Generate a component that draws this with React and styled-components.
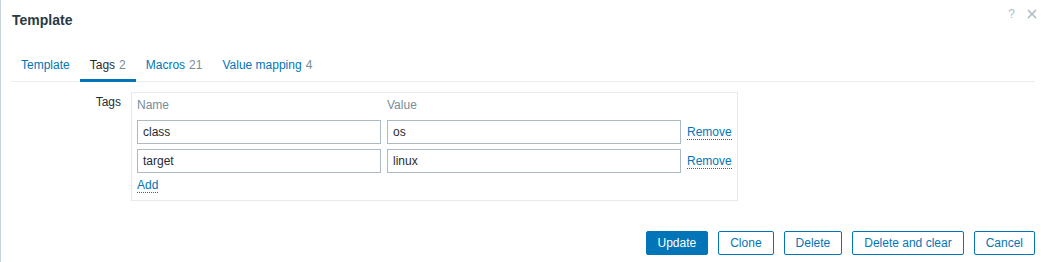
import React from "react";
import styled, { createGlobalStyle } from "styled-components";

const Global = createGlobalStyle`
  html, body { margin: 0; padding: 0; background: #fff; }
  body { font-family: "Liberation Sans", Arial, sans-serif; font-size: 12px; color: #1f2c33; }
  * { box-sizing: border-box; }
`;

const Dialog = styled.div`
  width: 1041px;
  height: 262px;
  border-left: 1px solid #c9d4da;
  background: #fff;
  display: flex;
  flex-direction: column;
`;

const Header = styled.div`
  display: flex;
  align-items: flex-start;
  justify-content: space-between;
  padding: 12px 4px 0 11px;
  height: 51px;
`;

const Title = styled.h4`
  margin: 0;
  font-size: 14px;
  line-height: 16px;
  font-weight: bold;
  color: #2b3a42;
`;

const HeaderIcons = styled.div`
  display: flex;
  align-items: center;
  gap: 12px;
  margin-top: -5px;
`;

const HelpMark = styled.span`
  color: #acbbc2;
  font-size: 12px;
  line-height: 14px;
`;

const Body = styled.div`
  padding: 0 6px 0 10px;
`;

const TabList = styled.div`
  display: flex;
  border-bottom: 1px solid #ebeef0;
  height: 31px;
`;

const Tab = styled.div`
  padding: 7px 10px 7px;
  line-height: 14px;
  height: 31px;
  color: ${(p) => (p.$active ? "#1f2c33" : "#0275b8")};
  border-bottom: 3px solid ${(p) => (p.$active ? "#0275b8" : "transparent")};
  white-space: nowrap;
`;

const Count = styled.span`
  color: #768d99;
  margin-left: 4px;
`;

const FormGrid = styled.div`
  display: grid;
  grid-template-columns: 110px auto;
  column-gap: 10px;
  margin-top: 10px;
  justify-content: start;
`;

const Label = styled.div`
  text-align: right;
  padding-top: 3px;
  line-height: 14px;
  color: #1f2c33;
`;

const TableBox = styled.div`
  border: 1px solid #e6eaec;
  padding: 5px;
  display: grid;
  grid-template-columns: 244px 294px auto;
  column-gap: 6px;
  row-gap: 5px;
  align-items: center;
`;

const Th = styled.div`
  color: #768d99;
  line-height: 14px;
  height: 17px;
  align-self: start;
`;

const Input = styled.input`
  height: 24px;
  width: 100%;
  border: 1px solid #acbbc2;
  padding: 0 5px;
  font-family: "Liberation Sans", Arial, sans-serif;
  font-size: 12px;
  color: #1f2c33;
  background: #fff;
  outline: none;
`;

const LinkAction = styled.span`
  color: #0275b8;
  border-bottom: 1px dotted #0275b8;
  line-height: 14px;
  justify-self: start;
  cursor: pointer;
`;

const AddCell = styled.div`
  grid-column: 1 / -1;
  height: 17px;
  line-height: 14px;
`;

const Footer = styled.div`
  display: flex;
  justify-content: flex-end;
  gap: 10px;
  padding: 30px 6px 0 10px;
`;

const Button = styled.button`
  height: 24px;
  padding: 0 11px;
  border: 1px solid #0275b8;
  border-radius: 2px;
  font-family: "Liberation Sans", Arial, sans-serif;
  font-size: 12px;
  line-height: 22px;
  color: ${(p) => (p.$primary ? "#fff" : "#0275b8")};
  background: ${(p) => (p.$primary ? "#0275b8" : "#fff")};
  cursor: pointer;
`;

const CloseIcon = () => (
  <svg width="10" height="10" viewBox="0 0 10 10">
    <path d="M1 1L9 9M9 1L1 9" stroke="#acbbc2" strokeWidth="1.6" />
  </svg>
);

const tags = [
  { name: "class", value: "os" },
  { name: "target", value: "linux" },
];

export default function App() {
  return (
    <>
      <Global />
      <Dialog>
        <Header>
          <Title>Template</Title>
          <HeaderIcons>
            <HelpMark>?</HelpMark>
            <CloseIcon />
          </HeaderIcons>
        </Header>
        <Body>
          <TabList>
            <Tab>Template</Tab>
            <Tab $active>
              Tags<Count>2</Count>
            </Tab>
            <Tab>
              Macros<Count>21</Count>
            </Tab>
            <Tab>
              Value mapping<Count>4</Count>
            </Tab>
          </TabList>
          <FormGrid>
            <Label>Tags</Label>
            <TableBox>
              <Th>Name</Th>
              <Th>Value</Th>
              <Th />
              {tags.map((t) => (
                <React.Fragment key={t.name}>
                  <Input defaultValue={t.name} />
                  <Input defaultValue={t.value} />
                  <LinkAction>Remove</LinkAction>
                </React.Fragment>
              ))}
              <AddCell>
                <LinkAction>Add</LinkAction>
              </AddCell>
            </TableBox>
          </FormGrid>
        </Body>
        <Footer>
          <Button $primary>Update</Button>
          <Button>Clone</Button>
          <Button>Delete</Button>
          <Button>Delete and clear</Button>
          <Button>Cancel</Button>
        </Footer>
      </Dialog>
    </>
  );
}
